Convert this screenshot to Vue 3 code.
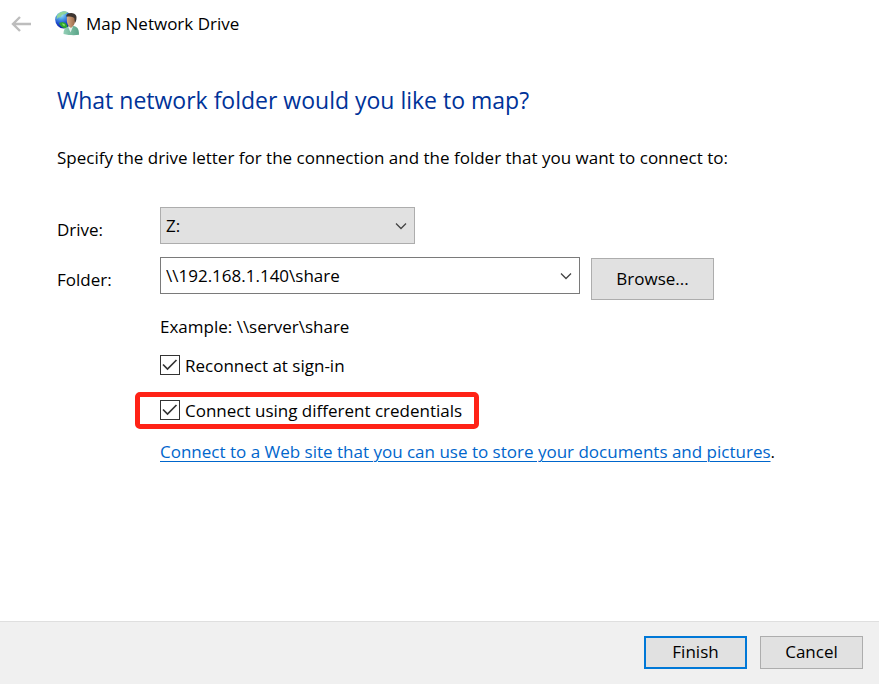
<script setup>
import { ref } from 'vue'

const drives = ['Z:', 'Y:', 'X:', 'W:']
const drive = ref('Z:')
const folder = ref('\\\\192.168.1.140\\share')
const reconnect = ref(true)
const otherCredentials = ref(true)
</script>

<template>
  <div class="wizard">
    <header class="bar">
      <button class="back" type="button" aria-label="Back">
        <svg width="20" height="16" viewBox="0 0 20 16" fill="none" stroke="#bdbdbd" stroke-width="2.4">
          <path d="M9 1 2 8l7 7M2 8h18" />
        </svg>
      </button>
      <svg class="logo" width="26" height="26" viewBox="0 0 26 26" aria-hidden="true">
        <defs>
          <radialGradient id="globe" cx="0.35" cy="0.2" r="0.8">
            <stop offset="0" stop-color="#a9e8f4" />
            <stop offset="0.35" stop-color="#4a9be6" />
            <stop offset="0.7" stop-color="#1c48cc" />
            <stop offset="1" stop-color="#10209c" />
          </radialGradient>
          <linearGradient id="face" x1="0" x2="1">
            <stop offset="0" stop-color="#dcae88" />
            <stop offset="1" stop-color="#9a6848" />
          </linearGradient>
          <linearGradient id="coat" x1="0" x2="1">
            <stop offset="0" stop-color="#93cfb6" />
            <stop offset="1" stop-color="#5aa488" />
          </linearGradient>
        </defs>
        <circle cx="8.800" cy="8.800" r="8.600" fill="url(#globe)" />
        <path d="M2 4.500C4 1.500 7 .3 10 .3l3 1-3 2-3 .5-1 2-3 1-1.500 2z" fill="#8fd49a" />
        <path d="M4 12l3.500-1 3 1 2 3-1 2c-3 .8-6-1-7.500-5z" fill="#2fa62c" />
        <path d="M7 12.500l2.500.5.5 2-2-.5z" fill="#8fe06a" />
        <path d="M8.500 23c0-4.500 1.500-6.500 5-7.500l5.500-.5c3.500 1 5 3 5 8.800-4 .6-10 .6-15.500-.8z" fill="url(#coat)" />
        <path d="M13 15.500l2.500 6 2.500-6z" fill="#e6f2ec" />
        <path d="M12 6c1-2 8-2 8 1v3c0 3-1.500 4.500-2.500 5.500L16 17l-2-1.500c-1.500-2-2.500-4-2-9.500z" fill="url(#face)" />
        <path d="M11 5.500C11.500 1 20 1 21.300 5c.6 2.500 0 5-1.300 7l-.7-5c-2-1.500-5.300-1.700-8.300-1.500z" fill="#3d3531" />
      </svg>
      <span class="caption">Map Network Drive</span>
    </header>

    <main class="content">
      <h1>What network folder would you like to map?</h1>
      <p class="intro">Specify the drive letter for the connection and the folder that you want to connect to:</p>

      <form id="map-form" class="form" @submit.prevent>
        <div class="row">
          <label for="drive">Drive:</label>
          <div class="combo drive">
            <select id="drive" v-model="drive">
              <option v-for="d in drives" :key="d">{{ d }}</option>
            </select>
            <svg class="chevron" width="12" height="8" viewBox="0 0 12 8" fill="none" stroke="#444" stroke-width="1.300">
              <path d="M1 1.500 6 6.500l5-5" />
            </svg>
          </div>
        </div>

        <div class="row">
          <label for="folder">Folder:</label>
          <div class="combo folder">
            <input id="folder" v-model="folder" type="text" spellcheck="false" />
            <svg class="chevron" width="12" height="8" viewBox="0 0 12 8" fill="none" stroke="#444" stroke-width="1.300">
              <path d="M1 1.500 6 6.500l5-5" />
            </svg>
          </div>
          <button class="btn browse" type="button">Browse...</button>
        </div>

        <div class="options">
          <p>Example: \\server\share</p>
          <label class="check">
            <input v-model="reconnect" type="checkbox" />
            <svg class="tick" viewBox="0 0 20 20" fill="none" stroke="#333" stroke-width="1.700"><path d="M3 9.500l4.500 4.500 9-9" /></svg>
            <span>Reconnect at sign-in</span>
          </label>
          <label class="check highlight">
            <input v-model="otherCredentials" type="checkbox" />
            <svg class="tick" viewBox="0 0 20 20" fill="none" stroke="#333" stroke-width="1.700"><path d="M3 9.500l4.500 4.500 9-9" /></svg>
            <span>Connect using different credentials</span>
          </label>
          <p class="web"><a href="#">Connect to a Web site that you can use to store your documents and pictures</a>.</p>
        </div>
      </form>
    </main>

    <footer class="footer">
      <button class="btn primary" type="submit" form="map-form">Finish</button>
      <button class="btn" type="button">Cancel</button>
    </footer>
  </div>
</template>

<style>
body {
  margin: 0;
  background: #fff;
}
</style>

<style scoped>
.wizard {
  display: flex;
  flex-direction: column;
  min-height: 100vh;
  font: 17px/24px "Open Sans", "Noto Sans", sans-serif;
  color: #000;
}
.wizard *,
.wizard {
  box-sizing: border-box;
}
h1,
p {
  margin: 0;
}
button,
input,
select {
  font: inherit;
  color: inherit;
  margin: 0;
}
.bar {
  display: flex;
  align-items: center;
  height: 48px;
  padding-left: 11px;
}
.back {
  display: flex;
  padding: 0;
  border: 0;
  background: none;
}
.logo {
  margin-left: 24px;
}
.caption {
  margin-left: 5px;
}
.content {
  flex: 1;
  padding: 36px 57px 24px;
}
h1 {
  font-size: 23px;
  line-height: 32px;
  font-weight: 400;
  color: #003399;
}
.intro {
  margin-top: 30px;
}
.form {
  display: flex;
  flex-direction: column;
  margin-top: 37px;
}
.row {
  display: flex;
  align-items: flex-start;
  height: 50px;
}
.row > label {
  width: 103px;
  padding-top: 11px;
}
.combo {
  position: relative;
  height: 37px;
}
.drive {
  width: 255px;
}
.folder {
  width: 420px;
}
.combo select,
.combo input {
  appearance: none;
  width: 100%;
  height: 100%;
  padding: 0 32px 0 5px;
  border: 1px solid #adadad;
  border-radius: 0;
  background: #e1e1e1;
  outline: none;
}
.combo input {
  border-color: #7a7a7a;
  background: #fff;
}
.chevron {
  position: absolute;
  right: 8px;
  top: 15px;
  pointer-events: none;
}
.btn {
  width: 103px;
  height: 33px;
  padding: 0;
  border: 1px solid #adadad;
  background: #e1e1e1;
}
.browse {
  width: 123px;
  height: 42px;
  margin: 1px 0 0 11px;
}
.primary {
  border: 2px solid #0078d7;
}
.options {
  display: flex;
  flex-direction: column;
  align-items: flex-start;
  margin-left: 103px;
  padding-top: 8px;
}
.check {
  display: flex;
  align-items: center;
  gap: 5px;
  margin-top: 15px;
}
.check input,
.tick {
  width: 20px;
  height: 20px;
  margin-bottom: 2px;
}
.check input {
  appearance: none;
  border: 1px solid #333;
  background: #fff;
}
.tick {
  margin-left: -25px;
  pointer-events: none;
  visibility: hidden;
}
.check input:checked + .tick {
  visibility: visible;
}
.highlight {
  height: 37px;
  margin: 14px 0 0 -25px;
  padding: 0 12px 0 20px;
  border: 5px solid #ff2216;
  border-radius: 5px;
}
.web {
  margin-top: 11px;
}
a {
  color: #0066cc;
  text-decoration: underline;
  text-decoration-thickness: 1px;
  text-underline-offset: 3px;
}
.footer {
  display: flex;
  align-items: center;
  justify-content: flex-end;
  gap: 13px;
  height: 63px;
  padding: 0 16px 2px 0;
  border-top: 1px solid #dfdfdf;
  background: #f0f0f0;
}
</style>
